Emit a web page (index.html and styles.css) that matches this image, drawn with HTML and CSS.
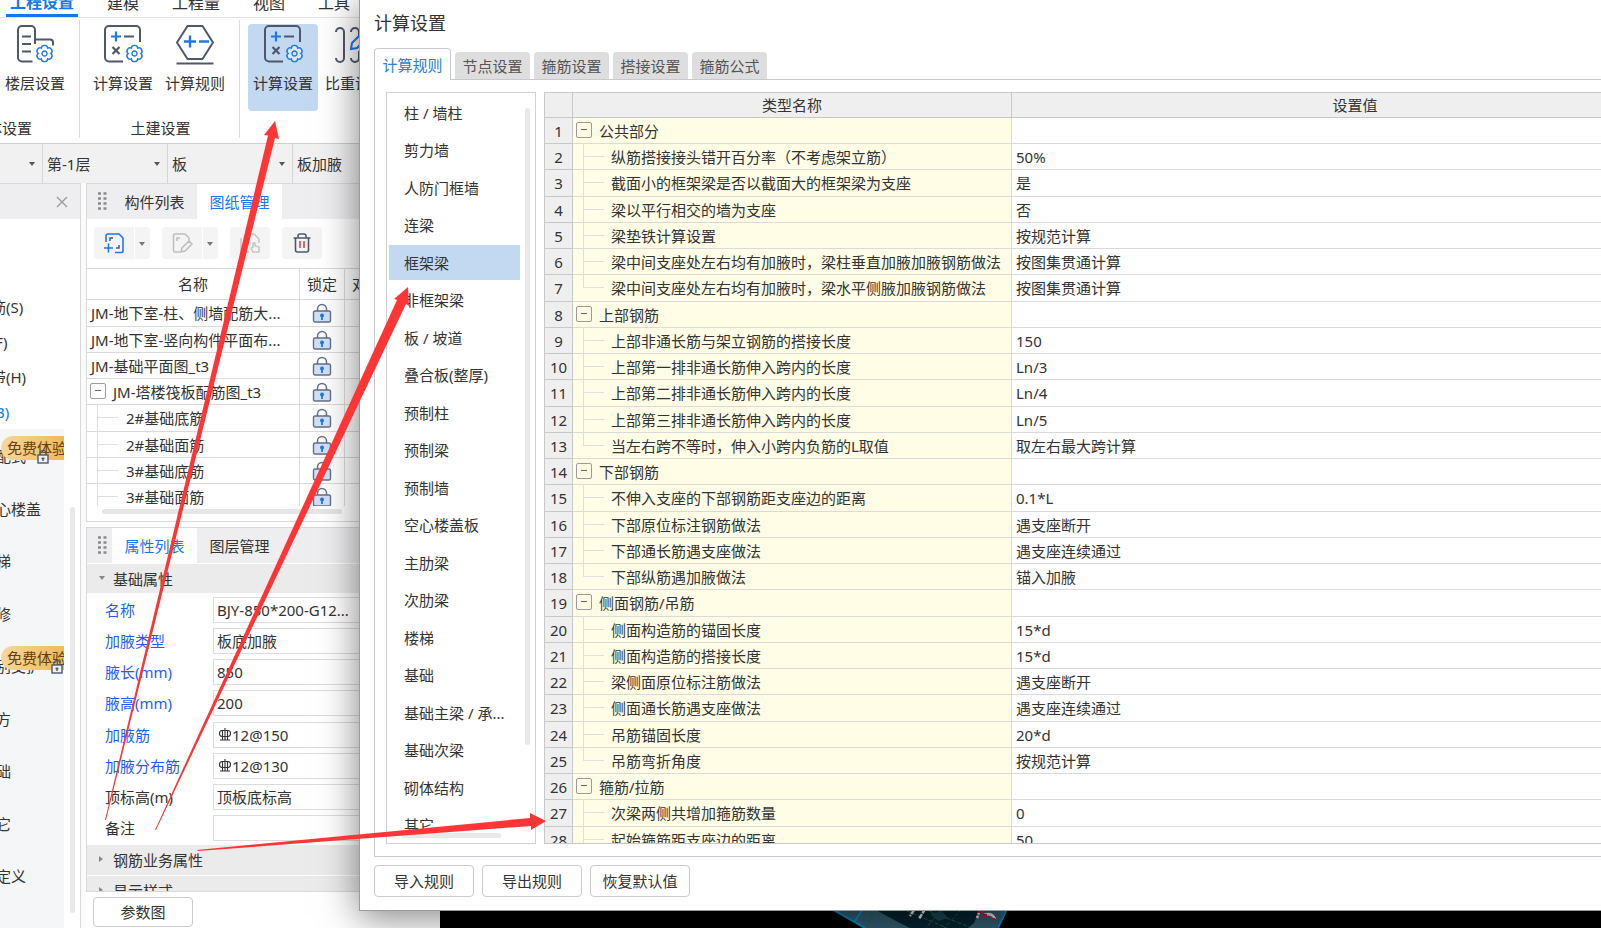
FILE: index.html
```html
<!DOCTYPE html>
<html lang="zh-CN">
<head>
<meta charset="utf-8">
<title>计算设置</title>
<link rel="stylesheet" href="styles.css">
</head>
<body>
<svg class="defs" aria-hidden="true">
  <symbol id="gear" viewBox="-10 -10 20 20">
    <path d="M6 0C8.8 1.9 6 6.7 3 5.2C2.8 8.6-2.8 8.6-3 5.2C-6 6.7-8.8 1.9-6 0C-8.8-1.9-6-6.7-3-5.2C-2.8-8.6 2.8-8.6 3-5.2C6-6.7 8.8-1.9 6 0Z" fill="#fff" fill-opacity=".4" stroke="#1f78e6" stroke-width="1.4"/>
    <circle r="2.4" fill="none" stroke="#1f78e6" stroke-width="1.3"/>
  </symbol>
  <symbol id="calc" viewBox="0 0 42 40">
    <path d="M21 37.500H7a4 4 0 0 1-4-4V6a4 4 0 0 1 4-4h27a4 4 0 0 1 4 4v12" fill="none" stroke="#4f586b" stroke-width="2"/>
    <path d="M9 12.500h10M14 7.500v10" stroke="#1f78e6" stroke-width="2.200"/>
    <path d="M22 12.500h10M10.500 23l7 7M17.500 23l-7 7" stroke="#4f586b" stroke-width="2.200"/>
    <use href="#gear" x="22" y="19" width="21" height="21"/>
  </symbol>
  <symbol id="lock" viewBox="0 0 20 20">
    <path d="M5.500 8V6a4.500 4.500 0 0 1 9 0v2" fill="none" stroke="#647086" stroke-width="1.500"/>
    <rect x="1.500" y="8" width="17" height="11" rx="1.500" fill="#cfe0f8" stroke="#647086" stroke-width="1.400"/>
    <circle cx="10" cy="12.500" r="2" fill="#1f78e6"/><path d="M10 12v5" stroke="#1f78e6" stroke-width="1.800"/>
  </symbol>
  <symbol id="rebar" viewBox="0 0 12 14">
    <path d="M3 2.500h6a2.500 3 0 0 1 0 6H3a2.500 3 0 0 1 0-6ZM6 0v12M3.500 2.500v9.500M8.500 2.500v9.500M1 12h10" fill="none" stroke="#333" stroke-width="1.100"/>
  </symbol>
  <symbol id="grip" viewBox="0 0 9 19">
    <path d="M0 1.500h3M5.500 1.500h3M0 6.500h3M5.500 6.500h3M0 11.500h3M5.500 11.500h3M0 16.500h3M5.500 16.500h3" stroke="#8a8a8a" stroke-width="2.400"/>
  </symbol>
  <symbol id="smalllock" viewBox="0 0 12 14">
    <path d="M3 5V3.500a3 3 0 0 1 6 0V5" fill="none" stroke="#4f586b" stroke-width="1.200"/>
    <rect x="1" y="5" width="10" height="8" fill="#eef0f3" stroke="#4f586b" stroke-width="1.400"/><path d="M6 7.500v3.500M4.500 8.500h3" stroke="#4f586b" stroke-width="1.400"/>
  </symbol>
</svg>

<div class="app">
  <nav class="menu">
    <a class="menu-item active" href="#">工程设置</a>
    <a class="menu-item" href="#">建模</a>
    <a class="menu-item" href="#">工程量</a>
    <a class="menu-item" href="#">视图</a>
    <a class="menu-item" href="#">工具</a>
  </nav>

  <div class="ribbon">
    <section class="group group-base">
      <div class="tools">
        <button class="tool"><svg width="42" height="40" viewBox="0 0 42 40"><path d="M18.500 37.500H8a4 4 0 0 1-4-4V6a4 4 0 0 1 4-4h9a4 4 0 0 1 4 4v14M21 15.500h15a3 3 0 0 1 3 3v3M8 12.500h9M8 20h9M8 27.500h9" fill="none" stroke="#4f586b" stroke-width="2"/><use href="#gear" x="20" y="19" width="21" height="21"/></svg><span>楼层设置</span></button>
      </div>
      <div class="group-name clipped">整体设置</div>
    </section>
    <section class="group group-civil">
      <div class="tools">
        <button class="tool"><svg width="42" height="40"><use href="#calc"/></svg><span>计算设置</span></button>
        <button class="tool"><svg width="42" height="42" viewBox="0 0 42 42"><path d="M13.500 2h15L39 18.500 28.500 35h-15L3 18.500Z" fill="none" stroke="#4f586b" stroke-width="2" stroke-linejoin="round"/><path d="M2.500 39.500h37" stroke="#4f586b" stroke-width="2"/><path d="M10 17.500h12M16 11.500v12M25 17.500h10" stroke="#1f78e6" stroke-width="2.400"/></svg><span>计算规则</span></button>
      </div>
      <div class="group-name">土建设置</div>
    </section>
    <section class="group group-steel">
      <div class="tools">
        <button class="tool selected"><svg width="42" height="40"><use href="#calc"/></svg><span>计算设置</span></button>
        <button class="tool"><svg width="42" height="40" viewBox="0 0 42 40"><path d="M2 8a4 4 0 0 1 8 0v26a4 4 0 0 1-8 0M17 8a4 4 0 0 1 8 0v4M17 34a4 4 0 0 0 8 0v-7" fill="none" stroke="#4f586b" stroke-width="2"/><path d="M17 25l1-6 11-11 5 5-11 11Z" fill="none" stroke="#1f78e6" stroke-width="2"/></svg><span>比重设置</span></button>
      </div>
    </section>
  </div>

  <div class="context-bar">
    <label class="combo combo-first"><select aria-label="楼栋"><option></option></select></label>
    <label class="combo"><select aria-label="楼层"><option>第-1层</option></select></label>
    <label class="combo"><select aria-label="构件类别"><option>板</option></select></label>
    <label class="combo"><select aria-label="构件类型"><option>板加腋</option></select></label>
  </div>

  <div class="workspace">
    <aside class="nav-dock">
      <header class="dock-head"><button class="close" aria-label="关闭"><svg width="12" height="12" viewBox="0 0 12 12"><path d="M1 1l10 10M11 1L1 11" stroke="#9a9a9a" stroke-width="1.400"/></svg></button></header>
      <ul class="nav-top">
        <li>筋(S)</li>
        <li class="short">F)</li>
        <li>带(H)</li>
        <li class="short current">B)</li>
      </ul>
      <div class="nav-area">
        <ul class="nav-sub">
          <li>配式<svg class="mini" width="12" height="14"><use href="#smalllock"/></svg><span class="badge">免费体验</span></li>
          <li>心楼盖</li>
          <li>梯</li>
          <li>修</li>
          <li>别支护<svg class="mini" width="12" height="14"><use href="#smalllock"/></svg><span class="badge">免费体验</span></li>
          <li>方</li>
          <li>础</li>
          <li>它</li>
          <li>定义</li>
        </ul>
        <span class="nav-scroll"></span>
      </div>
    </aside>

    <div class="side">
      <section class="panel">
        <header class="tabs">
          <svg class="grip" width="9" height="19"><use href="#grip"/></svg>
          <button class="tab">构件列表</button><button class="tab active">图纸管理</button>
        </header>
        <div class="toolbar">
          <span class="split"><button aria-label="添加图纸"><svg width="22" height="22" viewBox="0 0 22 22"><path d="M3 10V4a2 2 0 0 1 2-2h11l4 4v13a1.500 1.500 0 0 1-1.500 1.500H12M1 16h9M5.500 11.500v9" fill="none" stroke="#1f78e6" stroke-width="1.600"/><path d="M7 9V6h3M16 13v3h-3" fill="none" stroke="#4f586b" stroke-width="1.500"/></svg></button><button class="drop" aria-label="更多添加方式"></button></span>
          <span class="split"><button aria-label="编辑图纸"><svg width="22" height="22" viewBox="0 0 22 22"><path d="M9 20H4a1.500 1.500 0 0 1-1.500-1.500v-15A1.500 1.500 0 0 1 4 2h10l4 4v3M6 9V6h3M10 20l1-4 7-7 3 3-7 7Z" fill="none" stroke="#bdbdbd" stroke-width="1.500"/></svg></button><button class="drop" aria-label="更多编辑方式"></button></span>
          <span class="split"><button aria-label="定位图纸"><svg width="22" height="22" viewBox="0 0 22 22"><path d="M2 6V18a2 2 0 0 0 2 2h6M6 2h9l5 5v4M5 13v3h3M14 20l-2-4 2-1v-4h2v3l4 1v5Z" fill="none" stroke="#c6c6c6" stroke-width="1.500"/></svg></button></span>
          <span class="split"><button aria-label="删除"><svg width="20" height="22" viewBox="0 0 20 22"><path d="M1.500 6h17M3.500 6v12a2 2 0 0 0 2 2h9a2 2 0 0 0 2-2V6M6 6V4a2 2 0 0 1 2-2h4a2 2 0 0 1 2 2v2" fill="none" stroke="#4f586b" stroke-width="1.600"/><path d="M8 9v7M12 9v7" stroke="#e0353b" stroke-width="1.500"/></svg></button></span>
        </div>
        <div class="drawings">
          <table class="doc-table">
            <colgroup><col class="doc-name"><col class="doc-lock"><col></colgroup>
            <thead><tr><th>名称</th><th>锁定</th><th class="left">对应楼层</th></tr></thead>
            <tbody>
              <tr><td>JM-地下室-柱、侧墙配筋大...</td><td><svg width="20" height="20"><use href="#lock"/></svg></td><td></td></tr>
              <tr><td>JM-地下室-竖向构件平面布...</td><td><svg width="20" height="20"><use href="#lock"/></svg></td><td></td></tr>
              <tr><td>JM-基础平面图_t3</td><td><svg width="20" height="20"><use href="#lock"/></svg></td><td></td></tr>
              <tr><td class="node"><button class="toggle" aria-label="折叠"></button>JM-塔楼筏板配筋图_t3</td><td><svg width="20" height="20"><use href="#lock"/></svg></td><td></td></tr>
              <tr><td class="leaf">2#基础底筋</td><td><svg width="20" height="20"><use href="#lock"/></svg></td><td></td></tr>
              <tr><td class="leaf">2#基础面筋</td><td><svg width="20" height="20"><use href="#lock"/></svg></td><td></td></tr>
              <tr><td class="leaf">3#基础底筋</td><td><svg width="20" height="20"><use href="#lock"/></svg></td><td></td></tr>
              <tr><td class="leaf">3#基础面筋</td><td><svg width="20" height="20"><use href="#lock"/></svg></td><td></td></tr>
            </tbody>
          </table>
        </div>
        <span class="doc-scroll"></span>
      </section>

      <section class="panel">
        <header class="tabs">
          <svg class="grip" width="9" height="19"><use href="#grip"/></svg>
          <button class="tab active">属性列表</button><button class="tab">图层管理</button>
        </header>
        <div class="props">
          <h3 class="category open">基础属性</h3>
          <div class="fields">
            <div class="field blue"><label for="p1">名称</label><span class="box"><input id="p1" value="BJY-850*200-G12..."></span></div>
            <div class="field blue"><label for="p2">加腋类型</label><span class="box"><input id="p2" value="板底加腋"></span></div>
            <div class="field blue"><label for="p3">腋长(mm)</label><span class="box"><input id="p3" value="850"></span></div>
            <div class="field blue"><label for="p4">腋高(mm)</label><span class="box"><input id="p4" value="200"></span></div>
            <div class="field blue"><label for="p5">加腋筋</label><span class="box"><svg width="12" height="14"><use href="#rebar"/></svg><input id="p5" value="12@150"></span></div>
            <div class="field blue"><label for="p6">加腋分布筋</label><span class="box"><svg width="12" height="14"><use href="#rebar"/></svg><input id="p6" value="12@130"></span></div>
            <div class="field"><label for="p7">顶标高(m)</label><span class="box"><input id="p7" value="顶板底标高"></span></div>
            <div class="field"><label for="p8">备注</label><span class="box"><input id="p8" value=""></span></div>
          </div>
          <h3 class="category">钢筋业务属性</h3>
          <h3 class="category">显示样式</h3>
        </div>
      </section>
      <button class="btn param">参数图</button>
    </div>

    <main class="canvas">
      <svg width="176" height="19" viewBox="0 0 176 19">
        <path d="M0 0h175l-10 19H32Z" fill="#31596b"/>
        <path d="M42 0h106l-6 14-6 5H78L66 13Z" fill="#04222f"/>
        <path d="M0 0l33 19M175 0l-9 19M31 0l-8 12" fill="none" stroke="#0b84bd" stroke-width="2"/>
        <path d="M44 0l-9 15M75 2l40 17M92 0l45 18M110 0l-16 19M130 0l-18 19M160 0l-5 8" fill="none" stroke="#14623f" stroke-dasharray="4 2"/>
        <path d="M98 5l12-3 6 7-10 3Z" fill="#1c4450"/>
        <path d="M82 1l-4 6M93 0l-6 10M148 1l-3 8" stroke="#d8dadb" stroke-width="2.500" stroke-dasharray="5 1"/>
        <path d="M152 6q8-3 11 4" fill="none" stroke="#d8dadb" stroke-width="2.500"/>
        <path d="M146 1h4v3h-4ZM151 5h4v3h-4ZM160 9h3v2h-3Z" fill="#cf1111"/>
      </svg>
    </main>
  </div>
</div>

<div class="dialog" role="dialog" aria-labelledby="dlg-title">
  <h2 class="dlg-title" id="dlg-title">计算设置</h2>
  <div class="dlg-tabs">
    <button class="dlg-tab active">计算规则</button><button class="dlg-tab">节点设置</button><button class="dlg-tab">箍筋设置</button><button class="dlg-tab">搭接设置</button><button class="dlg-tab">箍筋公式</button>
  </div>
  <div class="page">
    <div class="kinds">
      <ul>
        <li>柱 / 墙柱</li><li>剪力墙</li><li>人防门框墙</li><li>连梁</li><li class="selected">框架梁</li><li>非框架梁</li><li>板 / 坡道</li><li>叠合板(整厚)</li><li>预制柱</li><li>预制梁</li><li>预制墙</li><li>空心楼盖板</li><li>主肋梁</li><li>次肋梁</li><li>楼梯</li><li>基础</li><li>基础主梁 / 承...</li><li>基础次梁</li><li>砌体结构</li><li>其它</li>
      </ul>
      <span class="bar-v"></span><span class="bar-h"></span>
    </div>
    <div class="rules">
      <table class="rule-table">
        <colgroup><col class="c-no"><col class="c-name"><col></colgroup>
        <thead><tr><th></th><th>类型名称</th><th>设置值</th></tr></thead>
        <tbody>
          <tr><th>1</th><td class="node"><button class="toggle" aria-label="折叠"></button>公共部分</td><td></td></tr>
          <tr><th>2</th><td class="leaf">纵筋搭接接头错开百分率（不考虑架立筋）</td><td>50%</td></tr>
          <tr><th>3</th><td class="leaf">截面小的框架梁是否以截面大的框架梁为支座</td><td>是</td></tr>
          <tr><th>4</th><td class="leaf">梁以平行相交的墙为支座</td><td>否</td></tr>
          <tr><th>5</th><td class="leaf">梁垫铁计算设置</td><td>按规范计算</td></tr>
          <tr><th>6</th><td class="leaf">梁中间支座处左右均有加腋时，梁柱垂直加腋加腋钢筋做法</td><td>按图集贯通计算</td></tr>
          <tr><th>7</th><td class="leaf last">梁中间支座处左右均有加腋时，梁水平侧腋加腋钢筋做法</td><td>按图集贯通计算</td></tr>
          <tr><th>8</th><td class="node"><button class="toggle" aria-label="折叠"></button>上部钢筋</td><td></td></tr>
          <tr><th>9</th><td class="leaf">上部非通长筋与架立钢筋的搭接长度</td><td>150</td></tr>
          <tr><th>10</th><td class="leaf">上部第一排非通长筋伸入跨内的长度</td><td>Ln/3</td></tr>
          <tr><th>11</th><td class="leaf">上部第二排非通长筋伸入跨内的长度</td><td>Ln/4</td></tr>
          <tr><th>12</th><td class="leaf">上部第三排非通长筋伸入跨内的长度</td><td>Ln/5</td></tr>
          <tr><th>13</th><td class="leaf last">当左右跨不等时，伸入小跨内负筋的L取值</td><td>取左右最大跨计算</td></tr>
          <tr><th>14</th><td class="node"><button class="toggle" aria-label="折叠"></button>下部钢筋</td><td></td></tr>
          <tr><th>15</th><td class="leaf">不伸入支座的下部钢筋距支座边的距离</td><td>0.1*L</td></tr>
          <tr><th>16</th><td class="leaf">下部原位标注钢筋做法</td><td>遇支座断开</td></tr>
          <tr><th>17</th><td class="leaf">下部通长筋遇支座做法</td><td>遇支座连续通过</td></tr>
          <tr><th>18</th><td class="leaf last">下部纵筋遇加腋做法</td><td>锚入加腋</td></tr>
          <tr><th>19</th><td class="node"><button class="toggle" aria-label="折叠"></button>侧面钢筋/吊筋</td><td></td></tr>
          <tr><th>20</th><td class="leaf">侧面构造筋的锚固长度</td><td>15*d</td></tr>
          <tr><th>21</th><td class="leaf">侧面构造筋的搭接长度</td><td>15*d</td></tr>
          <tr><th>22</th><td class="leaf">梁侧面原位标注筋做法</td><td>遇支座断开</td></tr>
          <tr><th>23</th><td class="leaf">侧面通长筋遇支座做法</td><td>遇支座连续通过</td></tr>
          <tr><th>24</th><td class="leaf">吊筋锚固长度</td><td>20*d</td></tr>
          <tr><th>25</th><td class="leaf last">吊筋弯折角度</td><td>按规范计算</td></tr>
          <tr><th>26</th><td class="node"><button class="toggle" aria-label="折叠"></button>箍筋/拉筋</td><td></td></tr>
          <tr><th>27</th><td class="leaf">次梁两侧共增加箍筋数量</td><td>0</td></tr>
          <tr><th>28</th><td class="leaf">起始箍筋距支座边的距离</td><td>50</td></tr>
        </tbody>
      </table>
    </div>
  </div>
  <footer class="actions">
    <button class="btn">导入规则</button><button class="btn">导出规则</button><button class="btn">恢复默认值</button>
  </footer>
</div>

<svg class="arrows" width="560" height="860" viewBox="0 0 560 860" fill="#fc3636" aria-hidden="true">
  <path d="M105 820L268 135.500 264 135 275 121 279 139 275 138 106 820Z"/>
  <path d="M155 830L397 300 394 299 408 287 409 306 406 304 156 830Z"/>
  <path d="M197 850L530 818V813L546 821 531 830V826L198 851Z"/>
</svg>
</body>
</html>
```

FILE: styles.css
```css
* { box-sizing: border-box; }
body {
  margin: 0;
  height: 100vh;
  position: relative;
  overflow: hidden;
  background: #fff;
  color: #333;
  font: 15px/20px "Noto Sans", "Noto Sans CJK SC", sans-serif;
}
button, input, select { font: inherit; color: inherit; border: 0; padding: 0; background: none; margin: 0; }
ul { list-style: none; margin: 0; padding: 0; }
h2, h3 { margin: 0; font-size: 15px; font-weight: 400; }
svg { display: block; flex: none; }
.defs { position: absolute; width: 0; height: 0; }

.app { display: flex; flex-direction: column; height: 100%; overflow: hidden; }

/* menu and ribbon */
.menu {
  display: flex;
  align-items: flex-end;
  gap: 33px;
  height: 18px;
  padding-left: 6px;
  border-bottom: 1px solid #e4e4e4;
  font-size: 16px;
  line-height: 24px;
  overflow: hidden;
}
.menu-item { color: #333; text-decoration: none; white-space: nowrap; padding-bottom: 2px; }
.menu-item.active { color: #1677e8; font-weight: 700; padding: 0 4px; border-bottom: 3px solid #1677e8; margin-right: -4px; }
.ribbon { display: flex; height: 125px; padding-top: 2px; background: #fff; }
.group { flex: none; height: 118px; border-right: 1px solid #dcdcdc; padding-left: 8px; }
.group-base { width: 80px; padding-left: 0; }
.group-civil { width: 160px; }
.group-steel { border: 0; }
.tools { display: flex; gap: 2px; padding-top: 4px; }
.tool { display: flex; flex-direction: column; align-items: center; width: 70px; height: 87px; border-radius: 4px; }
.tool span { margin-top: auto; padding-bottom: 18px; }
.tool.selected { background: #c3d9f2; }
.group-name { padding-top: 7px; text-align: center; white-space: nowrap; }
.group-civil .group-name { padding-right: 6px; }
.group-name.clipped { margin-left: -28px; text-align: left; }

.context-bar { display: flex; height: 40px; background: #f1f1f1; border-top: 1px solid #cfcfcf; }
.combo { position: relative; width: 125px; border-right: 1px solid #d6d6d6; }
.combo-first { width: 43px; }
.combo select { appearance: none; width: 100%; height: 100%; padding-left: 4px; }
.combo::after, .drop::after {
  content: "";
  position: absolute;
  right: 7px;
  top: 18px;
  border: 3px solid transparent;
  border-top: 4px solid #555;
  border-bottom: 0;
}

/* left dock */
.workspace { display: flex; flex: 1; min-height: 0; background: #fbfbfb; }
.nav-dock { display: flex; flex-direction: column; flex: none; width: 81px; background: #fff; border: 1px solid #d9d9d9; border-width: 1px 1px 0 0; overflow: hidden; }
.dock-head { display: flex; align-items: center; justify-content: flex-end; flex: none; height: 35px; padding-right: 12px; background: #eeeef0; }
.nav-top { padding-top: 71px; height: 210px; }
.nav-top li { height: 35px; line-height: 35px; margin-left: -9px; }
.nav-top .short { margin-left: -5px; }
.nav-top .current { color: #1677e8; }
.nav-area { display: flex; justify-content: space-between; flex: 1; padding-right: 5px; }
.nav-sub { width: 64px; padding-top: 1px; background: #f5f6f8; overflow: hidden; }
.nav-sub li { position: relative; height: 53px; line-height: 52px; margin-left: -4px; white-space: nowrap; }
.nav-sub li:nth-child(even) { height: 52px; }
.mini { position: absolute; right: 15px; top: 20px; z-index: 2; }
.nav-sub li:nth-child(5) .mini { right: 1px; }
.badge { position: absolute; left: 5px; top: 6px; width: 64px; height: 24px; padding-left: 6px; line-height: 24px; border-radius: 12px 0 0 12px; background: linear-gradient(90deg, #f5d79d, #edbb57); color: #6b3d0c; }
.nav-scroll { width: 5px; height: 406px; margin-top: 78px; border-radius: 3px; background: #e9e9e9; }

/* docked panels */
.side { display: flex; flex-direction: column; align-items: flex-start; flex: none; width: 354px; margin-left: 5px; background: #fff; }
.panel { width: 100%; background: #fff; border: 1px solid #d9d9d9; border-right: 0; margin-bottom: 5px; }
.tabs { display: flex; align-items: center; height: 35px; background: #eeeef0; }
.grip { margin: 0 5px 0 11px; }
.tab { width: 85px; height: 35px; }
.tab.active { background: #fff; color: #1677e8; }
.toolbar { display: flex; gap: 12px; padding: 8px 7px; height: 49px; }
.split { display: flex; gap: 1px; height: 32px; border-radius: 4px; overflow: hidden; }
.split button { display: flex; align-items: center; justify-content: center; width: 40px; height: 32px; background: #f4f4f4; }
.split .drop { position: relative; width: 15px; }
.drop::after { right: 5px; top: 15px; border-top-color: #777; }
.drawings { height: 238px; overflow: hidden; border-top: 1px solid #dadada; }
table { border-collapse: separate; border-spacing: 0; table-layout: fixed; width: 100%; }
td, th { position: relative; padding: 0; font-weight: 400; white-space: nowrap; }
.doc-name { width: 213px; }
.doc-lock { width: 45px; }
.doc-table th { height: 31px; border: 1px solid #dadada; border-width: 0 1px 1px 0; }
.doc-table .left { text-align: left; padding-left: 7px; }
.doc-table td { height: 26px; padding-left: 4px; border: 1px solid #dadada; border-width: 0 1px 1px 0; }
.doc-table tbody tr:nth-child(4n+1) td { height: 27px; }
.doc-table td + td { padding-left: 12px; }
.doc-scroll { display: block; width: 240px; height: 5px; margin: 3px 0 7px 15px; border-radius: 3px; background: #e6e6e6; }

/* tree cells */
.toggle { position: absolute; left: 3px; top: 4px; width: 16px; height: 16px; border: 1px solid #9c9c9c; border-radius: 2px; background: transparent; z-index: 1; }
.toggle::after { content: ""; position: absolute; left: 4px; top: 6px; width: 6px; height: 1px; background: #666; }
.leaf::before { content: ""; position: absolute; left: 10px; top: -1px; bottom: -1px; width: 1px; background: #dfdfdf; }
.leaf::after { content: ""; position: absolute; left: 10px; top: 12px; width: 21px; height: 1px; background: #dfdfdf; }
.leaf.last::before { bottom: 13px; }
.doc-table .node { padding-left: 26px; }
.doc-table .leaf { padding-left: 39px; }

/* properties */
.props { height: 328px; overflow: hidden; border-top: 1px solid #fff; }
.category { position: relative; height: 31px; padding-left: 26px; line-height: 30px; background: #ebebeb; border-bottom: 1px solid #fff; }
.category.open { height: 29px; border: 0; }
.category::before { content: ""; position: absolute; left: 12px; top: 11px; border: 3px solid transparent; border-left: 4px solid #888; border-right: 0; }
.category.open::before { border: 3px solid transparent; border-top: 4px solid #888; border-bottom: 0; top: 12px; }
.fields { padding: 1px 0 1px 18px; }
.field { display: flex; align-items: center; height: 31px; }
.field:nth-child(4n) { height: 32px; }
.field label { flex: none; width: 108px; }
.blue label { color: #1e5cff; }
.box { display: flex; align-items: center; flex: 1; min-width: 0; height: 26px; padding-left: 3px; border: 1px solid #dcdcdc; border-right: 0; }
.box svg { margin: 0 1px 0 2px; }
.box input { flex: 1; min-width: 0; height: 24px; }
.btn { height: 32px; width: 100px; border: 1px solid #c9cbcf; border-radius: 4px; background: #fff; }
.param { height: 30px; margin-left: 7px; }

.canvas { display: flex; align-items: flex-end; flex: 1; min-width: 0; background: #000; }
.canvas svg { margin-left: 392px; }

/* settings dialog: floats over the workspace and runs past the right edge */
.dialog {
  position: absolute;
  left: 359px;
  right: -115px;
  top: -1px;
  display: flex;
  flex-direction: column;
  height: 912px;
  padding: 0 16px 13px 14px;
  background: #fff;
  border: 1px solid #9b9b9b;
  box-shadow: 0 6px 36px rgba(0, 0, 0, .5);
}
.dlg-title { flex: none; height: 48px; line-height: 46px; font-size: 18px; }
.dlg-tabs { display: flex; align-items: flex-end; gap: 4px; flex: none; height: 32px; position: relative; z-index: 1; margin-bottom: -1px; }
.dlg-tab { width: 75px; height: 27px; margin-bottom: 1px; border-radius: 4px 4px 0 0; background: #dedede; color: #555; }
.dlg-tab.active { width: 77px; height: 32px; margin-bottom: 0; border: 1px solid #c6cad0; border-bottom: 0; background: #fff; color: #2a7de6; }
.page { display: flex; gap: 8px; flex: 1; min-height: 0; padding: 12px 0 12px 11px; border: 1px solid #c6cad0; border-right: 0; }
.kinds { position: relative; flex: none; width: 150px; padding: 2px 15px 0 2px; border: 1px solid #d2d2d2; overflow: hidden; }
.kinds li { height: 35px; line-height: 36px; margin-bottom: 2px; padding-left: 15px; white-space: nowrap; }
.kinds li:nth-child(even) { margin-bottom: 3px; }
.kinds .selected { background: #c3d9f2; }
.bar-v { position: absolute; right: 5px; top: 15px; width: 5px; height: 637px; border-radius: 3px; background: #e9e9e9; }
.bar-h { position: absolute; left: 14px; bottom: 5px; width: 100px; height: 5px; border-radius: 3px; background: #e9e9e9; }
.rules { flex: 1; min-width: 0; overflow: hidden; border: 1px solid #c8c8c8; border-right: 0; }
.c-no { width: 28px; }
.c-name { width: 439px; }
.rule-table th { background: #efefef; border: 1px solid #c8c8c8; border-width: 0 1px 1px 0; text-align: center; }
.rule-table thead th { height: 25px; }
.rule-table tbody th, .rule-table td { height: 26px; }
.rule-table tbody tr:nth-child(4n+3) > * { height: 27px; }
.rule-table td { padding-left: 4px; border: 1px solid #dadada; border-width: 0 1px 1px 0; }
.rule-table td:nth-child(2) { background: #fffde5; }
.rule-table .node { padding-left: 26px; }
.rule-table .leaf { padding-left: 38px; }
.actions { display: flex; gap: 8px; flex: none; padding-top: 8px; }

.arrows { position: absolute; left: 0; top: 0; pointer-events: none; }
```
